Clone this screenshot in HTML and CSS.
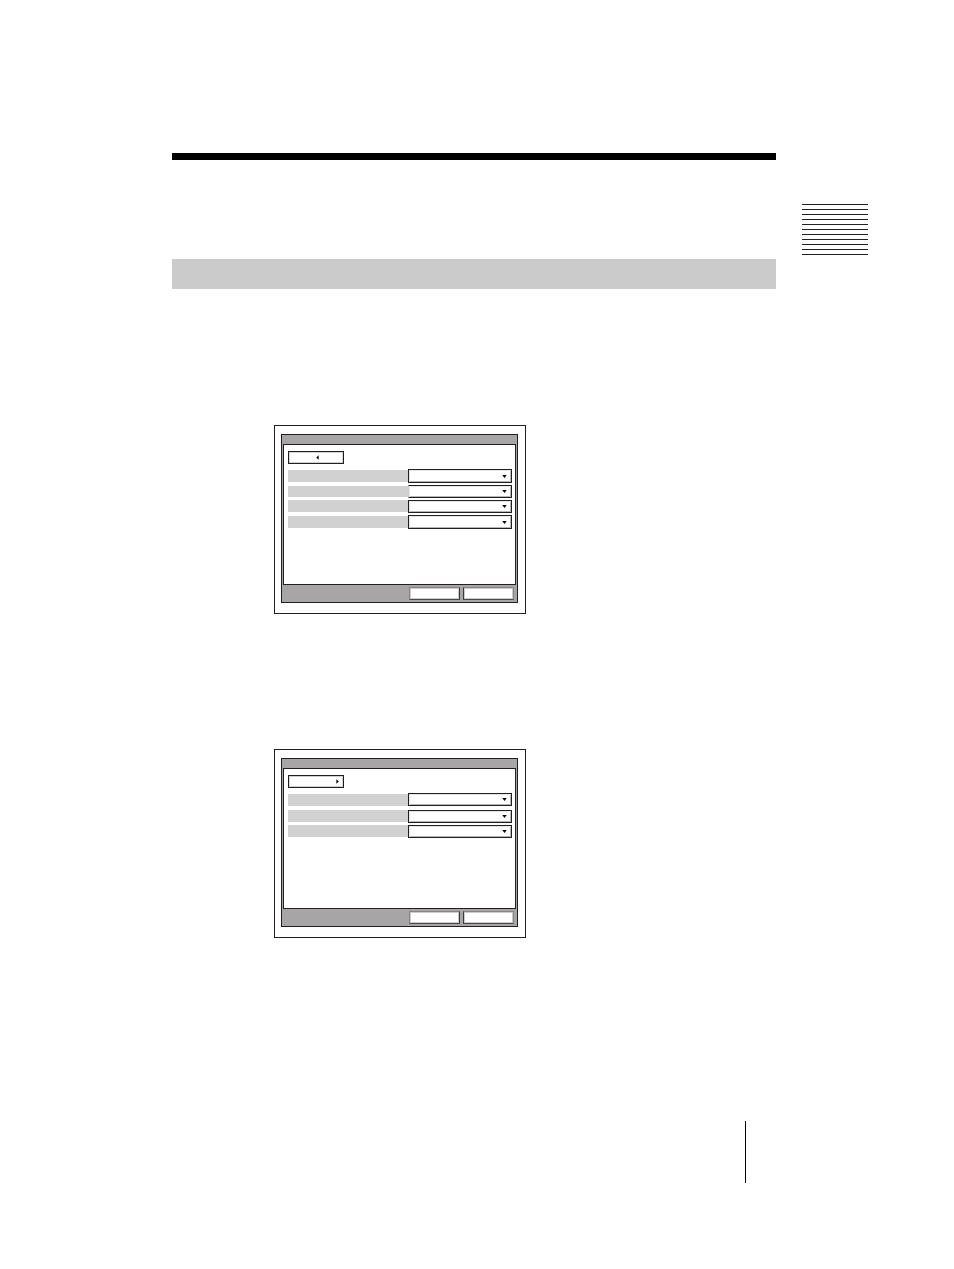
FILE: index.html
```html
<!DOCTYPE html>
<html lang="en">
<head>
<meta charset="utf-8">
<meta name="viewport" content="width=device-width, initial-scale=1">
<title>Menu settings</title>
<link rel="stylesheet" href="styles.css">
</head>
<body>
<div class="page">
  <main class="content">
    <div class="chapter-rule"></div>
    <div class="section-band"></div>

    <section class="screen" aria-label="First page of settings">
      <form class="window">
        <div class="titlebar"></div>
        <div class="panel">
          <button class="pager" type="button" aria-label="Previous page">
            <svg class="pager-arrow" viewBox="0 0 3 5" aria-hidden="true"><path d="M2.6 0.2V4.8L0.2 2.5Z"/></svg>
          </button>
          <div class="rows">
            <div class="row row-tall"><label class="name" for="a1"></label><div class="field"><select class="choice" id="a1" aria-label="Setting 1"></select><svg class="caret" viewBox="0 0 5 3" aria-hidden="true"><path d="M0.3 0H4.7L2.5 3Z"/></svg></div></div>
            <div class="row row-open"><label class="name" for="a2"></label><div class="field"><select class="choice" id="a2" aria-label="Setting 2"></select><svg class="caret" viewBox="0 0 5 3" aria-hidden="true"><path d="M0.3 0H4.7L2.5 3Z"/></svg></div></div>
            <div class="row row-flush"><label class="name" for="a3"></label><div class="field"><select class="choice" id="a3" aria-label="Setting 3"></select><svg class="caret" viewBox="0 0 5 3" aria-hidden="true"><path d="M0.3 0H4.7L2.5 3Z"/></svg></div></div>
            <div class="row row-tall"><label class="name" for="a4"></label><div class="field"><select class="choice" id="a4" aria-label="Setting 4"></select><svg class="caret" viewBox="0 0 5 3" aria-hidden="true"><path d="M0.3 0H4.7L2.5 3Z"/></svg></div></div>
          </div>
        </div>
        <div class="actions">
          <button class="action action-first" type="button" aria-label="OK"></button>
          <button class="action action-second" type="button" aria-label="Cancel"></button>
        </div>
      </form>
    </section>

    <section class="screen screen-next" aria-label="Second page of settings">
      <form class="window">
        <div class="titlebar"></div>
        <div class="panel">
          <button class="pager pager-next" type="button" aria-label="Next page">
            <svg class="pager-arrow" viewBox="0 0 3 5" aria-hidden="true"><path d="M0.4 0.2V4.8L2.8 2.5Z"/></svg>
          </button>
          <div class="rows">
            <div class="row row-spaced"><label class="name" for="b1"></label><div class="field"><select class="choice" id="b1" aria-label="Setting 5"></select><svg class="caret" viewBox="0 0 5 3" aria-hidden="true"><path d="M0.3 0H4.7L2.5 3Z"/></svg></div></div>
            <div class="row row-flush"><label class="name" for="b2"></label><div class="field"><select class="choice" id="b2" aria-label="Setting 6"></select><svg class="caret" viewBox="0 0 5 3" aria-hidden="true"><path d="M0.3 0H4.7L2.5 3Z"/></svg></div></div>
            <div class="row row-flush"><label class="name" for="b3"></label><div class="field"><select class="choice" id="b3" aria-label="Setting 7"></select><svg class="caret" viewBox="0 0 5 3" aria-hidden="true"><path d="M0.3 0H4.7L2.5 3Z"/></svg></div></div>
          </div>
        </div>
        <div class="actions">
          <button class="action action-first" type="button" aria-label="OK"></button>
          <button class="action action-second" type="button" aria-label="Cancel"></button>
        </div>
      </form>
    </section>

    <div class="folio-rule"></div>
  </main>
  <aside class="margin"><div class="thumb-index"></div></aside>
</div>
</body>
</html>
```
FILE: styles.css
```css
* { box-sizing: border-box; }

body {
  margin: 0;
  background: #fff;
  font-family: "Liberation Sans", Arial, sans-serif;
}

.page {
  display: flex;
  gap: 26px;
  padding: 153px 86px 86px 172px;
}

.content {
  flex: 1;
  display: flex;
  flex-direction: column;
  min-width: 0;
}

.chapter-rule {
  height: 7px;
  background: #000;
}

.section-band {
  height: 30px;
  margin-top: 99px;
  background: #cbcbcb;
}

.margin {
  width: 66px;
  padding-top: 51px;
}

.thumb-index {
  height: 51px;
  background: repeating-linear-gradient(#231f20 0 1px, transparent 1px 5px);
}

/* Menu screens */
.screen {
  width: 252px;
  margin: 136px 0 0 102px;
  padding: 8px 7px 10px 6px;
  border: 1px solid #231f20;
}

.screen-next { margin-top: 135px; }

.window {
  border: 1px solid #231f20;
  background: #a7a5a6;
}

.titlebar { height: 9px; }

.panel {
  min-height: 141px;
  margin: 0 1px;
  padding: 6px 3px 6px 4px;
  border: 1px solid #231f20;
  background: #fff;
}

.pager {
  display: flex;
  align-items: center;
  justify-content: center;
  width: 56px;
  height: 13px;
  padding: 0 0 0 3px;
  border: 1px solid #231f20;
  border-radius: 0;
  background: #fff;
  box-shadow: inset 0 0 0 1px #d1d1d1;
}

.pager-next {
  justify-content: flex-end;
  padding: 0 4px 0 0;
}

.pager-arrow {
  width: 3px;
  height: 5px;
  fill: #000;
}

.rows {
  display: flex;
  flex-direction: column;
  gap: 2px;
  padding-top: 5px;
}

.row {
  display: flex;
  height: 13px;
}

.row-tall { height: 14px; }

.row-spaced { margin-bottom: 2px; }

.name {
  flex: 1;
  margin: 1px 0;
  background: #d1d1d1;
}

.row-flush .name { margin-top: 0; }

.row-spaced .name { margin-bottom: 0; }

.field {
  position: relative;
  display: flex;
  width: 104px;
}

.choice {
  appearance: none;
  width: 100%;
  padding: 0;
  border: 1px solid #231f20;
  border-radius: 0;
  background: #fff;
  box-shadow: inset 1px 1px #e6e6e6, inset -1px -1px #b5b5b5;
}

.row-open .choice { border-left-color: #d1d1d1; }

.caret {
  position: absolute;
  top: 5px;
  right: 5px;
  width: 5px;
  height: 3px;
  fill: #000;
  pointer-events: none;
}

.row-tall .caret { top: 6px; }

.actions {
  display: flex;
  justify-content: flex-end;
  gap: 3px;
  padding: 2px 3px;
}

.action {
  width: 51px;
  height: 13px;
  padding: 0;
  border: 1px solid #858384;
  border-right-color: #3b3839;
  border-bottom-color: #4b4849;
  border-radius: 0;
  background: #fff;
  box-shadow: inset 0 0 0 1px #cbcbcb;
}

.action-second {
  border-left-color: #3b3839;
  border-right-color: #858384;
}

/* Vertical line beside the page number */
.folio-rule {
  align-self: flex-end;
  width: 1px;
  height: 62px;
  margin: 183px 30px 0 0;
  background: #000;
}
```
